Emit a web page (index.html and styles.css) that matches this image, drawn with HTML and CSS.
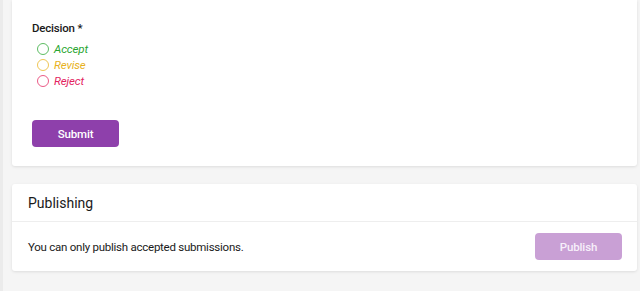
FILE: index.html
```html
<!DOCTYPE html>
<html>
<head>
<meta charset="utf-8">
<link rel="stylesheet" href="styles.css">
</head>
<body>
<div class="page">
  <section class="card review">
    <div class="field-label">Decision *</div>
    <div class="radios">
      <label class="radio accept"><span class="dot"></span><span class="txt">Accept</span></label>
      <label class="radio revise"><span class="dot"></span><span class="txt">Revise</span></label>
      <label class="radio reject"><span class="dot"></span><span class="txt">Reject</span></label>
    </div>
    <button class="btn submit">Submit</button>
  </section>
  <section class="card publishing">
    <header class="card-head">Publishing</header>
    <div class="card-body">
      <span class="note">You can only publish accepted submissions.</span>
      <button class="btn publish">Publish</button>
    </div>
  </section>
</div>
</body>
</html>
```
FILE: styles.css
```css
html, body {
  margin: 0;
  padding: 0;
  background: #f5f5f5;
  font-family: Roboto, "Liberation Sans", sans-serif;
  color: #1a1a1a;
}
.page {
  border-left: 3px solid #ebebeb;
  padding: 0 3px 0 9px;
  display: flex;
  flex-direction: column;
  gap: 18px;
  height: 291px;
  box-sizing: border-box;
}
.card {
  background: #fff;
  border-radius: 0 0 3px 3px;
  box-shadow: 0 1px 3px rgba(0,0,0,0.10);
}
.review {
  padding: 20px 20px 19px 20px;
  height: 166px;
  box-sizing: border-box;
}
.field-label {
  font-size: 11.5px;
  letter-spacing: -0.2px;
  font-weight: 500;
  line-height: 16px;
}
.radios {
  display: flex;
  flex-direction: column;
  margin-top: 5px;
  padding-left: 5px;
}
.radio {
  display: flex;
  align-items: center;
  gap: 5px;
  height: 16px;
  font-size: 11.5px;
  letter-spacing: -0.15px;
  font-style: italic;
}
.dot {
  width: 10px;
  height: 10px;
  border-radius: 50%;
  border: 1px solid currentColor;
  opacity: 0.75;
}
.accept { color: #27a52f; }
.revise { color: #e8b11c; }
.reject { color: #e3245f; }
.btn {
  border: 0;
  border-radius: 4px;
  color: #fff;
  font-family: Roboto, "Liberation Sans", sans-serif;
  font-size: 11.5px;
  letter-spacing: -0.15px;
  font-weight: 500;
  width: 87px;
  height: 27px;
  padding: 0;
}
.submit {
  margin-top: 31px;
  background: #8e40ab;
  display: block;
}
.publishing {
  border-radius: 3px;
}
.card-head {
  font-size: 14px;
  font-weight: 400;
  padding: 0 16px;
  height: 37px;
  display: flex;
  align-items: center;
  border-bottom: 1px solid #eeeeee;
}
.card-body {
  display: flex;
  justify-content: space-between;
  align-items: center;
  padding: 11px 15px 11px 16px;
}
.note {
  font-size: 11.5px;
  letter-spacing: -0.25px;
}
.publish {
  background: #c9a0d5;
  color: #f7effa;
}
```
